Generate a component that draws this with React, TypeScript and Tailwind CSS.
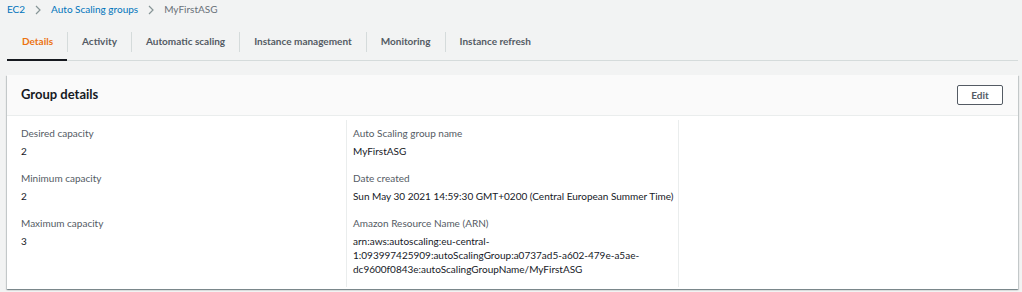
import React from "react";

const Chevron = () => (
  <svg width="8" height="10" viewBox="0 0 8 10" className="mx-[9px]">
    <path d="M2 1 L6 5 L2 9" fill="none" stroke="#879596" strokeWidth="1.2" />
  </svg>
);

const tabs = ["Details", "Activity", "Automatic scaling", "Instance management", "Monitoring", "Instance refresh"];

const Field = ({ label, children }: { label: string; children: React.ReactNode }) => (
  <div className="mb-[13px]">
    <div className="text-[#545b64] text-[10px] leading-[14px]">{label}</div>
    <div className="text-[#16191f] text-[10px] leading-[14px] mt-[4px]">{children}</div>
  </div>
);

export default function App() {
  return (
    <div className="w-[1022px] h-[292px] bg-[#f2f3f3] font-['Lato',sans-serif] overflow-hidden">
      <div className="flex items-center h-[19px] pl-[7px] text-[10px]">
        <span className="text-[#0073bb]">EC2</span>
        <Chevron />
        <span className="text-[#0073bb]">Auto Scaling groups</span>
        <Chevron />
        <span className="text-[#687078]">MyFirstASG</span>
      </div>
      <div className="mx-[7px] mt-[4px] flex border-b border-[#d5dbdb] h-[38px] items-stretch w-[1011px]">
        {tabs.map((t, i) => (
          <div key={t} className="flex items-center">
            {i > 0 && <div className="w-px h-[20px] bg-[#d5dbdb]" />}
            <div
              className={
                "px-[14px] text-[10px] font-bold h-full flex items-center " +
                (i === 0 ? "text-[#ec7211] border-b-2 border-[#16191f] -mb-px pl-[15px]" : "text-[#545b64]")
              }
            >
              {t}
            </div>
          </div>
        ))}
      </div>
      <div className="mx-[7px] mt-[14px] w-[1011px] h-[214px] bg-white shadow-[0_1px_1px_0_rgba(0,28,36,0.3),1px_1px_1px_0_rgba(0,28,36,0.15),-1px_1px_1px_0_rgba(0,28,36,0.15)] flex flex-col">
        <div className="h-[41px] shrink-0 bg-[#fafafa] border-b border-[#eaeded] flex items-center justify-between pl-[14px] pr-[15px]">
          <div className="text-[13px] font-bold text-[#16191f]">Group details</div>
          <button className="w-[46px] h-[20px] border border-[#545b64] rounded-[2px] bg-white text-[10px] font-bold text-[#545b64]">
            Edit
          </button>
        </div>
        <div className="flex flex-1 min-h-0 pt-[4px] pb-[2px]">
          <div className="w-[340px] border-r border-[#eaeded] pl-[14px] pt-[6px]">
            <Field label="Desired capacity">2</Field>
            <Field label="Minimum capacity">2</Field>
            <Field label="Maximum capacity">3</Field>
          </div>
          <div className="w-[332px] border-r border-[#eaeded] pl-[6px] pt-[6px]">
            <Field label="Auto Scaling group name">MyFirstASG</Field>
            <Field label="Date created">Sun May 30 2021 14:59:30 GMT+0200 (Central European Summer Time)</Field>
            <Field label="Amazon Resource Name (ARN)">
              <div className="leading-[14px] whitespace-nowrap">
                arn:aws:autoscaling:eu-central-
                <br />
                1:093997425909:autoScalingGroup:a0737ad5-a602-479e-a5ae-
                <br />
                dc9600f0843e:autoScalingGroupName/MyFirstASG
              </div>
            </Field>
          </div>
          <div className="flex-1" />
        </div>
      </div>
    </div>
  );
}
